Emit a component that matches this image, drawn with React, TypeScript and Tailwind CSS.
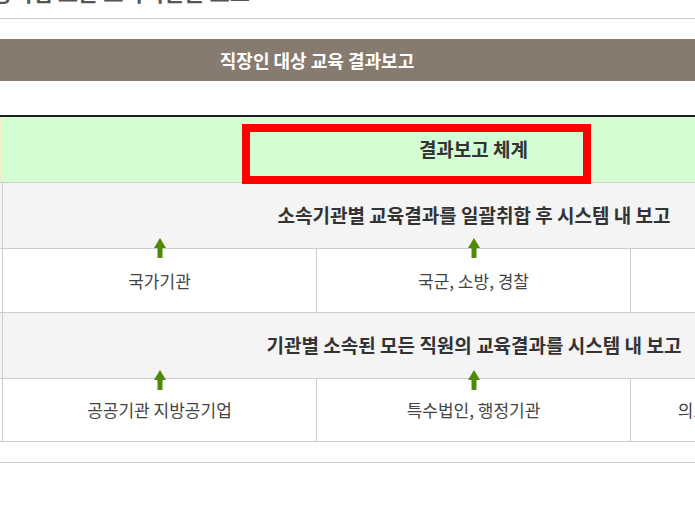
import React from "react";

const Arrow = ({ top }: { top: string }) => (
  <svg
    className={`absolute left-1/2 -translate-x-1/2 ${top}`}
    width="14"
    height="20"
    viewBox="0 0 14 20"
  >
    <path d="M7 0 L13 10 L9.5 10 L9.5 20 L4.5 20 L4.5 10 L1 10 Z" fill="#4d8a06" />
  </svg>
);

export default function App() {
  const font = { fontFamily: '"Noto Sans CJK KR", "Noto Sans", sans-serif' };
  return (
    <div className="w-[695px] h-[520px] overflow-hidden bg-white relative" style={font}>
      {/* clipped heading */}
      <div className="h-[19px] overflow-hidden border-b border-[#cccccc] relative">
        <div className="absolute right-[445px] top-[-24px] whitespace-nowrap text-[22px] font-bold text-[#555555] leading-[30px]">
          공공기관 및 지방공기업 모든 소속기관을 보고
        </div>
      </div>
      <div className="h-[20px]" />
      {/* brown bar */}
      <div className="h-[42px] bg-[#877a6e] flex items-center">
        <div className="w-[634px] text-center text-white font-bold text-[18px]">
          직장인 대상 교육 결과보고
        </div>
      </div>
      <div className="h-[34px]" />
      {/* table */}
      <div className="w-[945px] border-t-2 border-[#222222]">
        <div className="h-[66px] border-b border-[#cccccc] bg-[#d3fdd3] flex">
          <div className="w-[2px] bg-[#f3eec6]" />
          <div className="flex-1 flex items-center justify-center text-[19px] font-bold text-[#333333]">
            결과보고 체계
          </div>
        </div>
        <div className="h-[66px] border-b border-[#cccccc] bg-[#f4f4f4] flex">
          <div className="ml-[2px] flex-1 border-l border-[#cccccc] flex items-center justify-center text-[19px] font-bold text-[#333333]">
            소속기관별 교육결과를 일괄취합 후 시스템 내 보고
          </div>
        </div>
        <div className="h-[64px] border-b border-[#cccccc] flex">
          <div className="ml-[2px] flex-1 border-l border-[#cccccc] grid grid-cols-3 text-[17px] text-[#444444]">
            <div className="relative flex items-center justify-center border-r border-[#cccccc]">
              <Arrow top="top-[-11px]" />
              국가기관
            </div>
            <div className="relative flex items-center justify-center border-r border-[#cccccc]">
              <Arrow top="top-[-11px]" />
              국군, 소방, 경찰
            </div>
            <div className="relative flex items-center justify-center">
              <Arrow top="top-[-11px]" />
              지방자치단체
            </div>
          </div>
        </div>
        <div className="h-[66px] border-b border-[#cccccc] bg-[#f4f4f4] flex">
          <div className="ml-[2px] flex-1 border-l border-[#cccccc] flex items-center justify-center text-[19px] font-bold text-[#333333]">
            기관별 소속된 모든 직원의 교육결과를 시스템 내 보고
          </div>
        </div>
        <div className="h-[63px] border-b border-[#cccccc] flex">
          <div className="ml-[2px] flex-1 border-l border-[#cccccc] grid grid-cols-3 text-[17px] text-[#444444]">
            <div className="relative flex items-center justify-center border-r border-[#cccccc]">
              <Arrow top="top-[-9px]" />
              공공기관 지방공기업
            </div>
            <div className="relative flex items-center justify-center border-r border-[#cccccc]">
              <Arrow top="top-[-9px]" />
              특수법인, 행정기관
            </div>
            <div className="relative flex items-center justify-center">
              <Arrow top="top-[-9px]" />
              의료법인, 사회복지법인, 공제회
            </div>
          </div>
        </div>
        <div className="h-[21px] border-b border-[#cccccc]" />
      </div>
      {/* red annotation box */}
      <div className="absolute left-[242px] top-[124px] w-[349px] h-[60px] border-[8px] border-[#ff0000]" />
    </div>
  );
}
